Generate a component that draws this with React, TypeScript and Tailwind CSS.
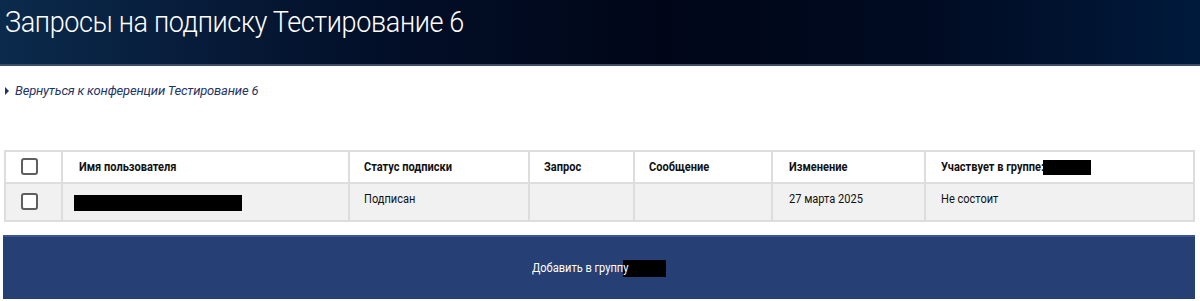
import React from 'react'

const font = { fontFamily: 'Roboto, "Noto Sans", sans-serif' }

const Box = () => (
  <span className="inline-block h-[17px] w-[17px] rounded-[3px] border-2 border-[#5f5f5f] bg-white" />
)

const Redact = ({ w, h }: { w: string; h: string }) => <span className={`inline-block bg-black align-middle ${w} ${h}`} />

// condensed look: the original font is Roboto Condensed
const Cond = ({ children }: { children: React.ReactNode }) => (
  <span className="inline-block origin-left scale-x-[0.92] whitespace-nowrap">{children}</span>
)

const cell = 'border-2 border-[#dddddd]'

export default function App() {
  return (
    <div className="min-h-[301px] w-[1200px] bg-white" style={font}>
      <header className="h-[66px] border-b-2 border-[#3d4d66] bg-[linear-gradient(90deg,#0b2a4c_0%,#03102a_30%,#000618_55%,#000a20_75%,#001a3c_100%)] px-[5px]">
        <h1 className="inline-block origin-left scale-x-[0.9] whitespace-nowrap pt-[4px] text-[30px] font-light leading-[36px] tracking-[-0.4px] text-white">
          Запросы на подписку Тестирование 6
        </h1>
      </header>

      <div className="px-[5px] pt-[17px]">
        <a href="#" className="flex items-center gap-[6px] text-[13px] italic leading-[16px] text-[#1f3566]">
          <span className="h-0 w-0 border-y-[4px] border-l-[4px] border-y-transparent border-l-[#1f3566]" />
          <span className="tracking-[-0.2px]">Вернуться к конференции Тестирование 6</span>
        </a>
      </div>

      <div className="px-[4px] pt-[51px]">
        <table className="w-[1191px] table-fixed border-collapse text-[12px] text-[#111]">
          <colgroup>
            <col className="w-[57px]" />
            <col className="w-[287px]" />
            <col className="w-[180px]" />
            <col className="w-[105px]" />
            <col className="w-[138px]" />
            <col className="w-[153px]" />
            <col />
          </colgroup>
          <thead>
            <tr className="h-[32px] bg-white">
              <th className={`${cell} pl-[15px] text-left align-middle`}>
                <span className="inline-flex pt-[3px]"><Box /></span>
              </th>
              <th className={`${cell} pl-[16px] text-left font-bold`}><Cond>Имя пользователя</Cond></th>
              <th className={`${cell} pl-[14px] text-left font-bold`}><Cond>Статус подписки</Cond></th>
              <th className={`${cell} pl-[14px] text-left font-bold`}><Cond>Запрос</Cond></th>
              <th className={`${cell} pl-[14px] text-left font-bold`}><Cond>Сообщение</Cond></th>
              <th className={`${cell} pl-[16px] text-left font-bold`}><Cond>Изменение</Cond></th>
              <th className={`${cell} pl-[15px] text-left font-bold`}>
                <span className="flex items-center">
                  <span className="w-[102px]"><Cond>Участвует в группе:</Cond></span>
                  <Redact w="w-[48px]" h="h-[15px]" />
                </span>
              </th>
            </tr>
          </thead>
          <tbody>
            <tr className="h-[38px] bg-[#f1f1f1]">
              <td className={`${cell} pl-[15px] text-left align-middle`}>
                <span className="inline-flex pt-[3px]"><Box /></span>
              </td>
              <td className={`${cell} pl-[11px] align-middle`}>
                <Redact w="w-[168px]" h="h-[16px]" />
              </td>
              <td className={`${cell} pl-[14px] pb-[6px]`}><Cond>Подписан</Cond></td>
              <td className={cell} />
              <td className={cell} />
              <td className={`${cell} pl-[16px] pb-[6px]`}><Cond>27 марта 2025</Cond></td>
              <td className={`${cell} pl-[15px] pb-[6px]`}><Cond>Не состоит</Cond></td>
            </tr>
          </tbody>
        </table>
      </div>

      <div className="px-[3px] pt-[13px]">
        <button className="flex h-[64px] w-[1192px] items-center justify-center border-t-2 border-[#3a5590] bg-[#263f74] text-[12px] text-white">
          <span className="inline-block w-[91px] whitespace-nowrap"><span className="inline-block origin-left scale-x-[0.92]">Добавить в группу</span></span>
          <Redact w="w-[43px]" h="h-[17px]" />
        </button>
      </div>
    </div>
  )
}
